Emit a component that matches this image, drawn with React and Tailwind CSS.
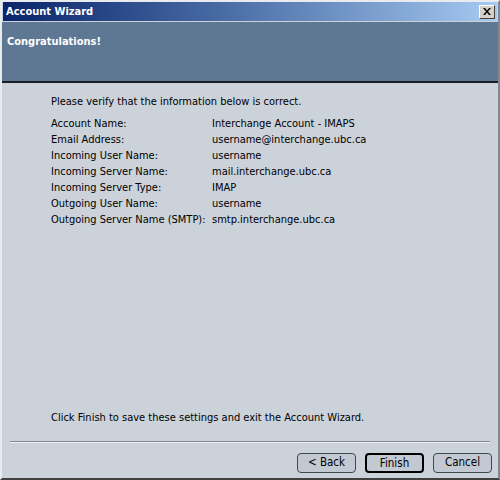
import React from "react";

const rows = [
  ["Account Name:", "Interchange Account - IMAPS"],
  ["Email Address:", "username@interchange.ubc.ca"],
  ["Incoming User Name:", "username"],
  ["Incoming Server Name:", "mail.interchange.ubc.ca"],
  ["Incoming Server Type:", "IMAP"],
  ["Outgoing User Name:", "username"],
  ["Outgoing Server Name (SMTP):", "smtp.interchange.ubc.ca"],
];

const Btn = ({ children, primary }) => (
  <button
    className={
      primary
        ? "w-[59px] h-[20px] rounded-[4px] border-2 border-black bg-[#c3c9d2] text-[11.5px] text-black"
        : "w-[59px] h-[20px] rounded-[4px] border border-[#404850] bg-[#c3c9d2] text-[11.5px] text-black"
    }
  >
    {children}
  </button>
);

export default function App() {
  return (
    <div
      className="w-[500px] h-[480px] bg-[#ccd2da] flex flex-col border-t-2 border-l-2 border-t-[#e8ecf0] border-l-[#e8ecf0] border-b-2 border-r-2 border-b-[#404040] border-r-[#808890] text-black font-stretch-condensed"
      style={{ fontFamily: '"DejaVu Sans Condensed", "DejaVu Sans", sans-serif' }}
    >
      {/* title bar */}
      <div className="h-[19px] mx-[1px] flex items-center justify-between pl-[3px] pr-[2px] bg-gradient-to-r from-[#0a246a] to-[#a6caf0]">
        <span className="text-white font-bold text-[11px] pt-[1px]">Account Wizard</span>
        <div className="w-[16px] h-[14px] bg-[#d4d0c8] border border-t-white border-l-white border-b-[#404040] border-r-[#404040] flex items-center justify-center">
          <svg width="8" height="7" viewBox="0 0 8 7">
            <path d="M0 0h2l2 2.5L6 0h2L5 3.5 8 7H6L4 4.5 2 7H0l3-3.5z" fill="#000" />
          </svg>
        </div>
      </div>
      {/* header */}
      <div className="mt-[1px] h-[61px] bg-[#5e7894] border-b-2 border-[#1a1f26] pl-[5px] pt-[6px]">
        <span className="text-white font-bold text-[11px]">Congratulations!</span>
      </div>
      {/* body */}
      <div className="flex-1 flex flex-col pl-[49px] pt-[11px] text-[11px]">
        <div>Please verify that the information below is correct.</div>
        <div className="mt-[6px] flex flex-col">
          {rows.map(([k, v]) => (
            <div key={k} className="flex h-[16px] items-center whitespace-nowrap">
              <span className="w-[161px]">{k}</span>
              <span>{v}</span>
            </div>
          ))}
        </div>
        <div className="mt-auto mb-[15px]">
          Click Finish to save these settings and exit the Account Wizard.
        </div>
      </div>
      <div className="mx-[8px] h-[2px] border-t border-[#808890] border-b border-b-[#eef0f4]" />
      <div className="h-[35px] flex items-start justify-end gap-[9px] pr-[6px] pt-[10px]">
        <Btn>&lt; Back</Btn>
        <Btn primary>Finish</Btn>
        <Btn>Cancel</Btn>
      </div>
    </div>
  );
}
